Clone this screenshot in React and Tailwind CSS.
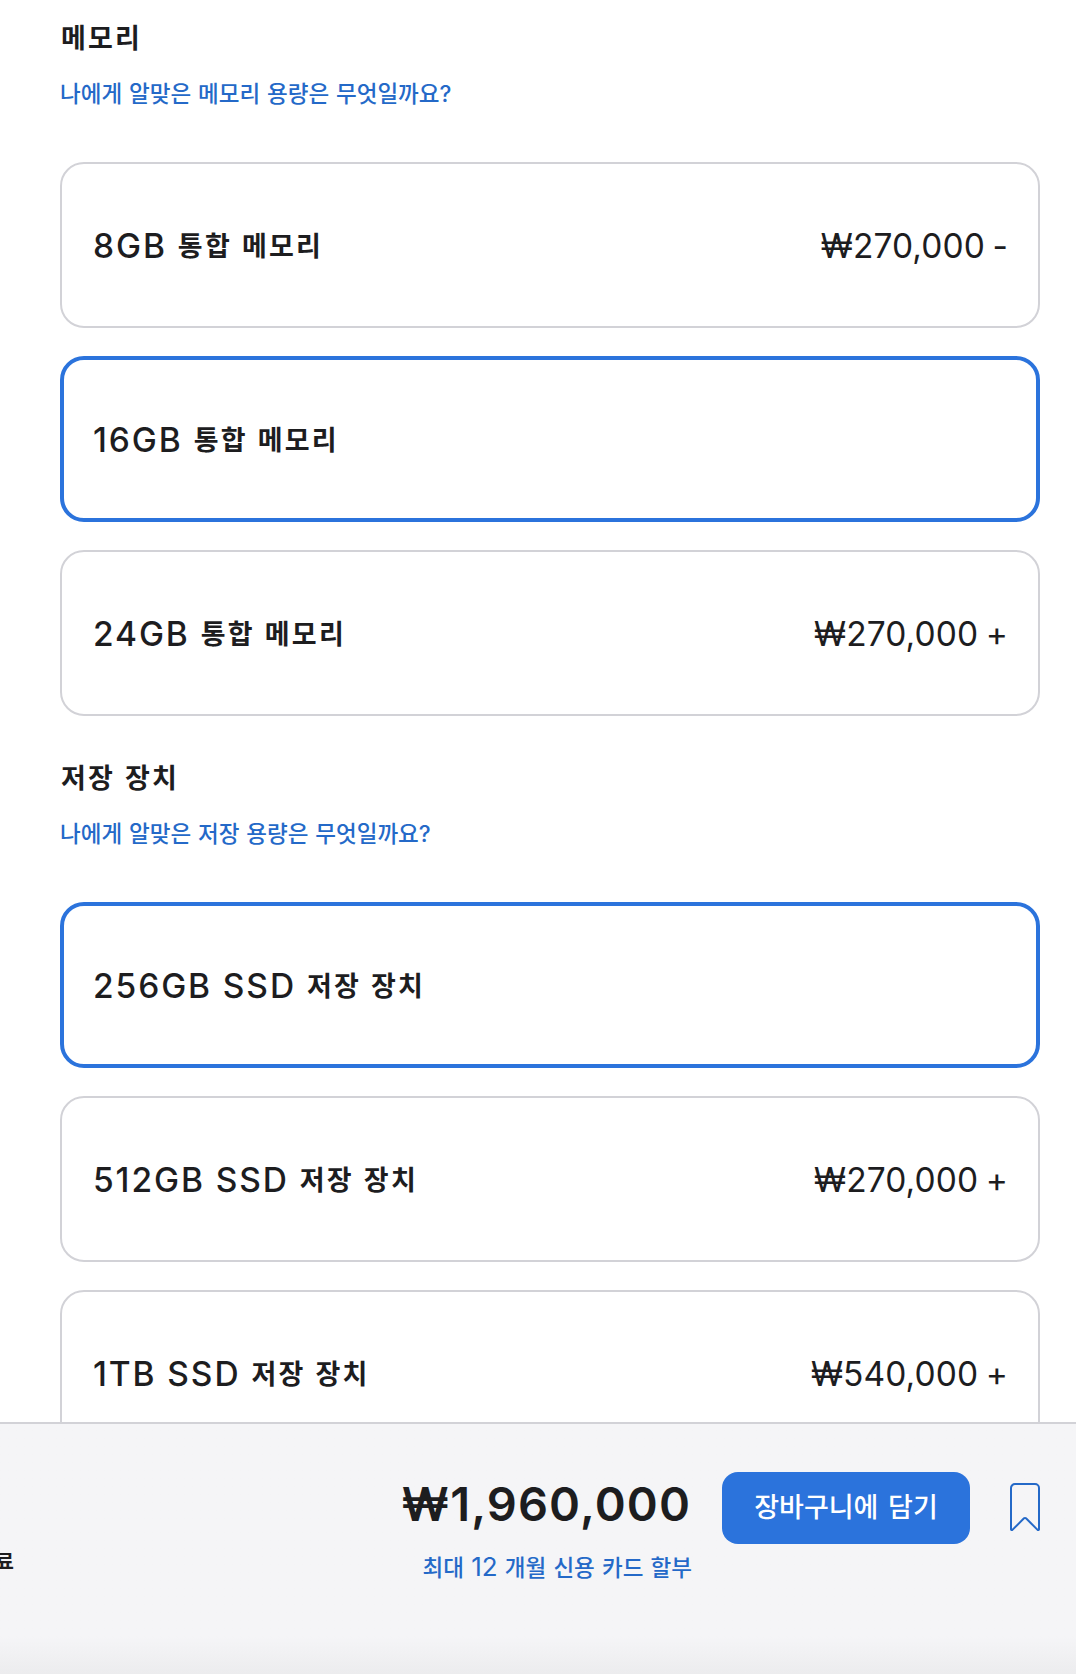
const sections = [
  {
    title: "메모리",
    link: "나에게 알맞은 메모리 용량은 무엇일까요?",
    options: [
      { size: "8GB", label: "통합 메모리", price: "₩270,000 -" },
      { size: "16GB", label: "통합 메모리", selected: true },
      { size: "24GB", label: "통합 메모리", price: "₩270,000 +" },
    ],
  },
  {
    title: "저장 장치",
    link: "나에게 알맞은 저장 용량은 무엇일까요?",
    options: [
      { size: "256GB SSD", label: "저장 장치", selected: true },
      { size: "512GB SSD", label: "저장 장치", price: "₩270,000 +" },
      { size: "1TB SSD", label: "저장 장치", price: "₩540,000 +" },
    ],
  },
];

function Option({ size, label, price, selected }) {
  return (
    <button
      className={`flex h-[166px] w-full items-center justify-between rounded-3xl pt-[3px] ${
        selected
          ? "border-4 border-[#2b73dc] pr-[28px] pl-[29px]"
          : "border-2 border-[#d2d2d7] pr-[30px] pl-[31px]"
      }`}
    >
      <span className="flex items-center gap-[11px] leading-none whitespace-nowrap">
        <span className="text-[33.5px] font-medium tracking-[1.9px]">{size}</span>
        <span className="text-[27px] font-bold tracking-[2.2px] [word-spacing:1.4px]">{label}</span>
      </span>
      {price && (
        <span className="text-[33.5px] leading-none tracking-[0.1px] [word-spacing:-2px]">{price}</span>
      )}
    </button>
  );
}

function Section({ title, link, options }) {
  return (
    <section className="pt-[15px] pb-[24px]">
      <h2 className="h-[48px] pl-px text-[27px] leading-[48px] font-bold tracking-[2.2px] [word-spacing:1.4px]">
        {title}
      </h2>
      <a href="#" className="mt-[13px] block h-9 text-[22.5px] leading-9 font-medium text-[#2469c8] [word-spacing:0.9px]">
        {link}
      </a>
      <div className="mt-[50px] flex flex-col gap-7">
        {options.map((option) => (
          <Option key={option.size} {...option} />
        ))}
      </div>
    </section>
  );
}

function BookmarkIcon() {
  return (
    <svg width="30" height="49" viewBox="0 0 30 49" fill="none" stroke="#2469c8" strokeWidth="2" strokeLinejoin="round">
      <path d="M5 2h20a4 4 0 0 1 4 4v41.300a.8.8 0 0 1-1.400.6L16 36.300a1.400 1.400 0 0 0-2 0L2.400 47.900a.8.8 0 0 1-1.400-.6V6a4 4 0 0 1 4-4z" />
    </svg>
  );
}

export default function App() {
  return (
    <div className="flex h-[1674px] w-[1076px] flex-col overflow-hidden bg-white font-['Inter','Noto_Sans_CJK_KR',sans-serif] text-[#1d1d1f]">
      <main className="h-[1422px] shrink-0 overflow-hidden pr-9 pl-[60px]">
        {sections.map((section) => (
          <Section key={section.title} {...section} />
        ))}
      </main>

      <footer className="flex grow items-start justify-between border-t-2 border-[#d2d2d7] bg-linear-to-b from-[#f5f5f7] from-85% to-[#ececee] pr-9">
        <div className="flex w-[14px] justify-end pt-[122px] text-[20px] leading-8 font-bold">
          <span>료</span>
        </div>
        <div className="flex items-start">
          <div className="pt-[50px] text-right whitespace-nowrap">
            <p className="h-[60px] pr-px text-[47px] leading-[60px] font-semibold tracking-[1.1px]">₩1,960,000</p>
            <a href="#" className="mt-[15px] block h-9 text-[22.5px] leading-9 font-medium text-[#2469c8] [word-spacing:1.2px]">
              최대 <span className="text-[26px] font-normal">12</span> 개월 신용 카드 할부
            </a>
          </div>
          <button className="mt-12 ml-[30px] h-[72px] w-[248px] rounded-2xl bg-[#2b73dc] pt-px text-[27px] font-medium text-white [word-spacing:2.5px]">
            장바구니에 담기
          </button>
          <button className="mt-[58px] ml-10">
            <BookmarkIcon />
          </button>
        </div>
      </footer>
    </div>
  );
}
